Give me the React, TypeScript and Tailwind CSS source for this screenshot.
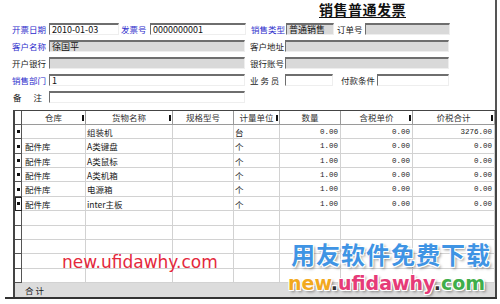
import React from 'react';

const cjk = { fontFamily: '"Noto Sans CJK SC", "Liberation Sans", sans-serif' };

type Field = { w: string; gray?: boolean; text?: string };

function Box({ w, gray, text }: Field) {
  return (
    <div
      className={`${w} h-[12px] border-t-2 border-l border-b border-r border-t-[#6e6e6e] border-l-[#6e6e6e] border-b-[#eeeeee] border-r-[#eeeeee] ${gray ? 'bg-[#d9d9d9]' : 'bg-white'} pl-[2px] text-[9px] leading-[9px] text-[#111] overflow-hidden whitespace-nowrap`}
    >
      {text}
    </div>
  );
}

function Label({ w, blue, children, ml }: { w: string; blue?: boolean; children: React.ReactNode; ml?: string }) {
  return (
    <div className={`${w} ${ml ?? ''} text-[8.5px] leading-[12px] whitespace-nowrap ${blue ? 'text-[#2d2dcc]' : 'text-[#1a1a1a]'}`}>
      {children}
    </div>
  );
}

const cols = [
  { name: '仓库', mark: true },
  { name: '货物名称', mark: true },
  { name: '规格型号', mark: false },
  { name: '计量单位', mark: true },
  { name: '数量', mark: false },
  { name: '含税单价', mark: true },
  { name: '价税合计', mark: true },
];

const rows = [
  ['', '组装机', '', '台', '0.00', '0.00', '3276.00'],
  ['配件库', 'A类键盘', '', '个', '1.00', '0.00', '0.00'],
  ['配件库', 'A类鼠标', '', '个', '1.00', '0.00', '0.00'],
  ['配件库', 'A类机箱', '', '个', '1.00', '0.00', '0.00'],
  ['配件库', '电源箱', '', '个', '1.00', '0.00', '0.00'],
  ['配件库', 'inter主板', '', '个', '1.00', '0.00', '0.00'],
];

const outline =
  '[text-shadow:1px_1px_0_#fff,-1px_-1px_0_#fff,1px_-1px_0_#fff,-1px_1px_0_#fff,0_1px_0_#fff,0_-1px_0_#fff,2px_2px_3px_rgba(0,0,0,0.45)]';

export default function App() {
  const empty = Array.from({ length: 5 }, () => ['', '', '', '', '', '', '']);
  const all = [...rows, ...empty];
  return (
    <div className="relative w-[500px] h-[304px] bg-white overflow-hidden" style={cjk}>
      <div className="w-[497px] h-[110px] border-r-2 border-[#555]">
        <div className="h-[22px] flex justify-end pr-[89px] pt-[1px]">
          <div className="text-[14px] leading-[16px] font-bold tracking-[0.5px] underline underline-offset-2 text-[#111]">
            销售普通发票
          </div>
        </div>
        <div className="flex flex-col gap-[5px] pl-[12px] pt-[1px]">
          <div className="flex items-center">
            <Label w="w-[37px]" blue>开票日期</Label>
            <Box w="w-[70px]" text="2010-01-03" />
            <Label w="w-[29px]" ml="ml-[2px]" blue>发票号</Label>
            <Box w="w-[96px]" text="0000000001" />
            <Label w="w-[35px]" ml="ml-[5px]" blue>销售类型</Label>
            <Box w="w-[48px]" gray text="普通销售" />
            <Label w="w-[28px]" ml="ml-[3px]">订单号</Label>
            <Box w="w-[85px]" gray />
          </div>
          <div className="flex items-center">
            <Label w="w-[37px]" blue>客户名称</Label>
            <Box w="w-[196px]" gray text="徐国平" />
            <Label w="w-[35px]" ml="ml-[5px]">客户地址</Label>
            <Box w="w-[164px]" gray />
          </div>
          <div className="flex items-center">
            <Label w="w-[37px]">开户银行</Label>
            <Box w="w-[196px]" gray />
            <Label w="w-[35px]" ml="ml-[5px]">银行账号</Label>
            <Box w="w-[164px]" gray />
          </div>
          <div className="flex items-center">
            <Label w="w-[37px]" blue>销售部门</Label>
            <Box w="w-[196px]" text="1" />
            <Label w="w-[35px]" ml="ml-[5px]">业 务 员</Label>
            <Box w="w-[48px]" />
            <Label w="w-[36px]" ml="ml-[8px]">付款条件</Label>
            <Box w="w-[72px]" />
          </div>
          <div className="flex items-center">
            <div className="w-[37px] flex justify-between pl-[1px] pr-[7px] text-[8.5px] leading-[12px] text-[#1a1a1a]">
              <span>备</span>
              <span>注</span>
            </div>
            <Box w="w-[196px]" />
          </div>
        </div>
      </div>

      <div className="ml-[13px] w-[484px] border-l-2 border-t border-r-2 border-[#444]">
        <div className="grid grid-cols-[7px_64px_87px_61px_46px_61px_72px_82px]">
          <div className="h-[14px] border-r border-b border-[#555]" />
          {cols.map((c) => (
            <div key={c.name} className="relative h-[14px] border-r border-b border-[#9a9a9a] text-center text-[8.5px] leading-[13px] text-[#333]">
              {c.name}
              {c.mark && <span className="absolute right-[1px] top-[4px] w-[2px] h-[6px] bg-[#111]" />}
            </div>
          ))}
          {all.map((r, i) => (
            <React.Fragment key={i}>
              <div
                className={`h-[14.36px] flex items-center justify-center border-r border-b border-[#555] ${i === 5 ? 'outline outline-1 outline-[#222] -outline-offset-1' : ''}`}
              >
                {i < 6 && <span className="w-[3px] h-[3px] bg-[#111]" />}
              </div>
              {r.map((v, j) => (
                <div
                  key={j}
                  className={`h-[14.36px] border-r border-b border-[#d2d2d2] whitespace-nowrap overflow-hidden ${
                    j >= 4
                      ? 'text-right pr-[2px] text-[7.5px] leading-[14px] text-[#222]'
                      : 'text-[8.5px] leading-[14px] text-[#1a1a1a] ' + (j === 0 ? 'pl-[3px]' : 'pl-[1px]')
                  }`}
                  style={j >= 4 ? { fontFamily: '"Liberation Mono", monospace' } : undefined}
                >
                  {v}
                </div>
              ))}
            </React.Fragment>
          ))}
          <div className="col-span-8 h-[14px] bg-[#dcdcdc] pl-[10px] text-[8.5px] leading-[14px] text-[#1a1a1a]">
            合 计
          </div>
        </div>
      </div>
      <div className="ml-[5px] w-[492px] h-[2px] bg-[#333]" />

      <div
        className="absolute left-[62px] top-[254px] text-[17px] leading-[17px] text-[#e4283c] whitespace-nowrap"
        style={{ fontFamily: '"DejaVu Sans", sans-serif' }}
      >
        new.ufidawhy.com
      </div>
      <div className={`absolute left-[291px] top-[240px] text-[24px] leading-[28px] font-bold tracking-[1px] text-[#3f94e4] whitespace-nowrap ${outline}`}>
        用友软件免费下载
      </div>
      <div
        className={`absolute left-[288px] top-[274px] text-[19px] leading-[19px] font-bold whitespace-nowrap ${outline}`}
        style={{ fontFamily: '"DejaVu Sans", sans-serif' }}
      >
        <span className="text-[#f2a91e]">new</span>
        <span className="text-[#333]">.</span>
        <span className="text-[#e63b78]">ufidawhy</span>
        <span className="text-[#333]">.</span>
        <span className="text-[#3fae4a]">com</span>
      </div>
    </div>
  );
}
